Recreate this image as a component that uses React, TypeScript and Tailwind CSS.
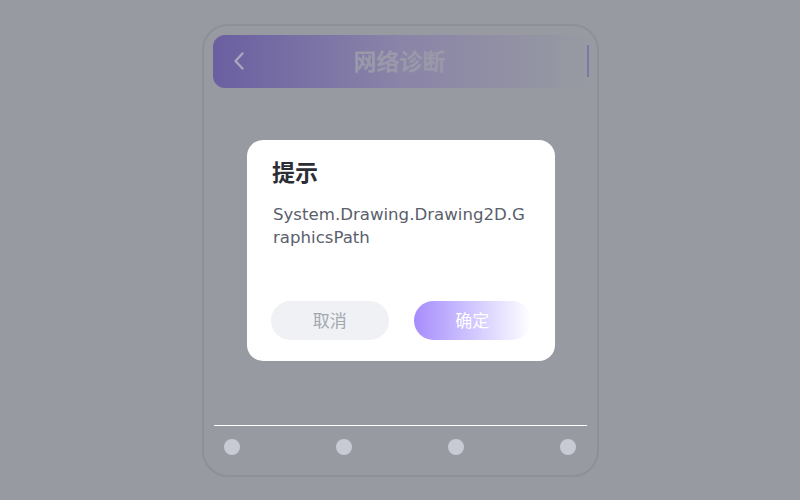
export default function App() {
	const dots = [0, 1, 2, 3]

	return (
		<div
			className="relative flex h-[500px] w-[800px] items-center justify-center overflow-hidden bg-[#979aa1]"
			style={{ fontFamily: '"Noto Sans", "Noto Sans CJK SC", sans-serif' }}
		>
			{/* phone frame, dimmed behind the dialog */}
			<div className="flex h-[453px] w-[397px] flex-col rounded-[26px] border-2 border-[#8d9098] bg-[#979aa1]">
				<div className="ml-[9px] mr-[8px] mt-[9px] flex h-[53px] items-center rounded-l-[12px] rounded-r-[4px] bg-gradient-to-r from-[#6b5fa1] via-[#8a84a8] to-[#979aa1]">
					<div className="flex w-[48px] justify-center pl-[4px]">
						<svg width="14" height="20" viewBox="0 0 14 20" fill="none">
							<path
								d="M10.5 2.5 L3.5 10 L10.5 17.5"
								stroke="#a9a8bd"
								strokeWidth="2.4"
								strokeLinecap="round"
								strokeLinejoin="round"
							/>
						</svg>
					</div>
					<p className="flex-1 text-center text-[23px] font-bold text-[#9a99a9]">
						网络诊断
					</p>
					<div className="w-[48px]" />
					<div className="h-[32px] w-[2px] bg-[#7e76ab]" />
				</div>

				<div className="flex-1" />

				<div className="mx-[10px] h-px bg-white" />
				<div className="flex justify-between px-[20px] pb-[20px] pt-[13px]">
					{dots.map((d) => (
						<span key={d} className="h-4 w-4 rounded-full bg-[#c8cbd3]" />
					))}
				</div>
			</div>

			{/* dialog */}
			<div className="absolute left-[247px] top-[140px] flex h-[221px] w-[308px] flex-col rounded-[16px] bg-white px-6 pb-[21px] pt-[17px]">
				<h2 className="pl-[1px] text-[23px] font-bold leading-[30px] text-[#2b2e35]">
					提示
				</h2>
				<p
					className="mt-[16px] break-all pl-[2px] text-[16.6px] leading-[23px] text-[#5a606b]"
					style={{ fontFamily: '"DejaVu Sans", "Noto Sans CJK SC", sans-serif' }}
				>
					System.Drawing.Drawing2D.GraphicsPath
				</p>
				<div className="mt-auto flex gap-[25px]">
					<button className="h-[39px] flex-1 rounded-full bg-[#f0f1f4] text-[17px] text-[#a3a7b0]">
						取消
					</button>
					<button className="h-[39px] flex-1 rounded-full bg-gradient-to-r from-[#a78cfb] to-white text-[17px] text-white">
						确定
					</button>
				</div>
			</div>
		</div>
	)
}
